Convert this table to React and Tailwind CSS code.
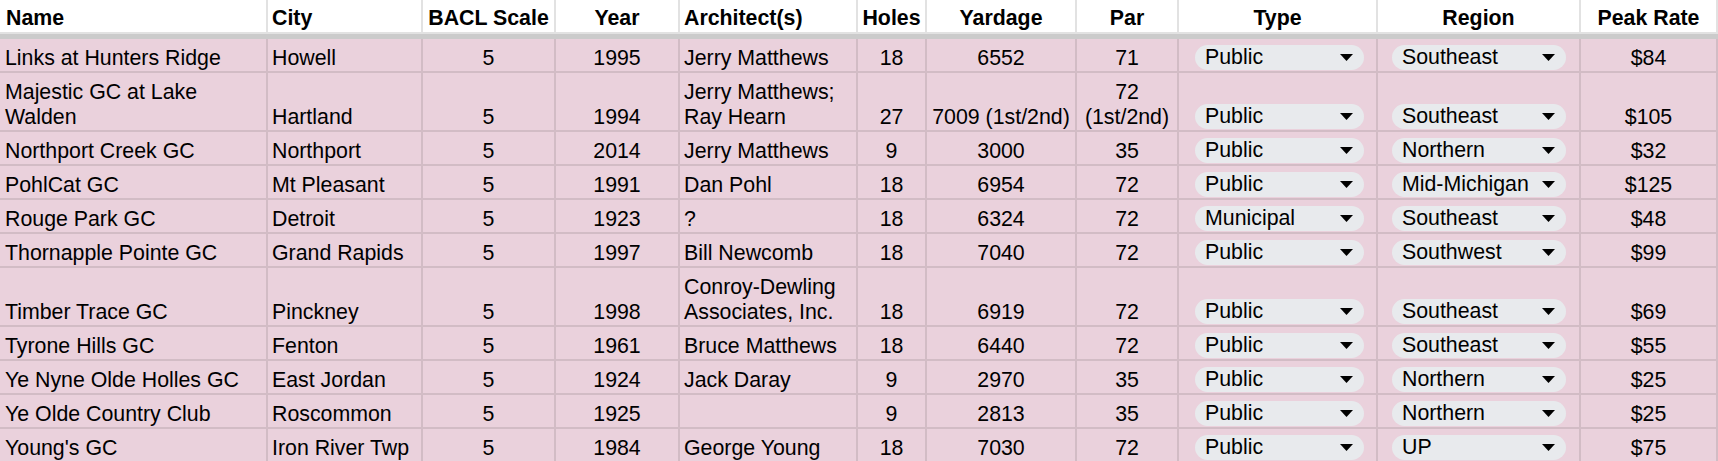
import React from "react";

const cols = "grid grid-cols-[268px_155px_133px_124px_178px_69px_150px_102px_199px_203px_137px]";

const headers = [
    { label: "Name", align: "left" },
    { label: "City", align: "left" },
    { label: "BACL Scale", align: "center" },
    { label: "Year", align: "center" },
    { label: "Architect(s)", align: "left" },
    { label: "Holes", align: "center" },
    { label: "Yardage", align: "center" },
    { label: "Par", align: "center" },
    { label: "Type", align: "center" },
    { label: "Region", align: "center" },
    { label: "Peak Rate", align: "center" },
];

const courses = [
    ["Links at Hunters Ridge", "Howell", "5", "1995", "Jerry Matthews", "18", "6552", "71", "Public", "Southeast", "$84"],
    [["Majestic GC at Lake", "Walden"], "Hartland", "5", "1994", ["Jerry Matthews;", "Ray Hearn"], "27", "7009 (1st/2nd)", ["72", "(1st/2nd)"], "Public", "Southeast", "$105"],
    ["Northport Creek GC", "Northport", "5", "2014", "Jerry Matthews", "9", "3000", "35", "Public", "Northern", "$32"],
    ["PohlCat GC", "Mt Pleasant", "5", "1991", "Dan Pohl", "18", "6954", "72", "Public", "Mid-Michigan", "$125"],
    ["Rouge Park GC", "Detroit", "5", "1923", "?", "18", "6324", "72", "Municipal", "Southeast", "$48"],
    ["Thornapple Pointe GC", "Grand Rapids", "5", "1997", "Bill Newcomb", "18", "7040", "72", "Public", "Southwest", "$99"],
    ["Timber Trace GC", "Pinckney", "5", "1998", ["Conroy-Dewling", "Associates, Inc."], "18", "6919", "72", "Public", "Southeast", "$69"],
    ["Tyrone Hills GC", "Fenton", "5", "1961", "Bruce Matthews", "18", "6440", "72", "Public", "Southeast", "$55"],
    ["Ye Nyne Olde Holles GC", "East Jordan", "5", "1924", "Jack Daray", "9", "2970", "35", "Public", "Northern", "$25"],
    ["Ye Olde Country Club", "Roscommon", "5", "1925", "", "9", "2813", "35", "Public", "Northern", "$25"],
    ["Young's GC", "Iron River Twp", "5", "1984", "George Young", "18", "7030", "72", "Public", "UP", "$75"],
];

const Caret = () => (
    <svg width="13" height="7" viewBox="0 0 13 7" className="shrink-0">
        <path d="M0 0 L13 0 L6.5 7 Z" fill="#000" />
    </svg>
);

const Chip = ({ value }) => (
    <div className="flex h-[25px] w-full items-center justify-between rounded-full bg-[#e8eaed] pl-[10px] pr-[11px] mb-[1px]">
        <span className="whitespace-nowrap leading-[25px]">{value}</span>
        <Caret />
    </div>
);

const Cell = ({ value, idx }) => {
    const align = headers[idx].align;
    if (idx === 8 || idx === 9) {
        return (
            <div className={`flex items-end border-r-2 border-b-2 border-[#d2bcc5] ${idx === 8 ? "pl-[16px] pr-[12px]" : "pl-[14px] pr-[13px]"}`}>
                <Chip value={value} />
            </div>
        );
    }
    const lines = Array.isArray(value) ? value : [value];
    return (
        <div
            className={`flex flex-col justify-end border-r-2 border-b-2 border-[#d2bcc5] pt-[7px] ${idx === 0 ? "pl-[5px]" : "pl-[4px]"} pr-[4px] ${align === "center" ? "items-center text-center" : "items-start"}`}
        >
            {lines.map((l, i) => (
                <span key={i} className="whitespace-nowrap leading-[25px] h-[25px]">{l}</span>
            ))}
        </div>
    );
};

const App = () => {
    return (
        <div className="w-[1718px] h-[461px] overflow-hidden bg-[#ead1dc] font-['Liberation_Sans',Arial,sans-serif] text-[21.33px] text-black">
            <div className={`${cols} bg-white`}>
                {headers.map((h, i) => (
                    <div
                        key={h.label}
                        className={`flex h-[34px] items-end border-r-2 border-b-2 border-[#e2e2e2] pb-[1px] pl-[4px] pr-[4px] font-bold ${i === 0 ? "pl-[6px]" : ""} ${h.align === "center" ? "justify-center" : "justify-start"}`}
                    >
                        <span className="whitespace-nowrap leading-[25px]">{h.label}</span>
                    </div>
                ))}
            </div>
            <div className="h-[5px] bg-[#cbcbcb]" />
            {courses.map((row, r) => (
                <div key={r} className={cols}>
                    {row.map((v, i) => (
                        <Cell key={i} value={v} idx={i} />
                    ))}
                </div>
            ))}
        </div>
    );
};

export default App;
